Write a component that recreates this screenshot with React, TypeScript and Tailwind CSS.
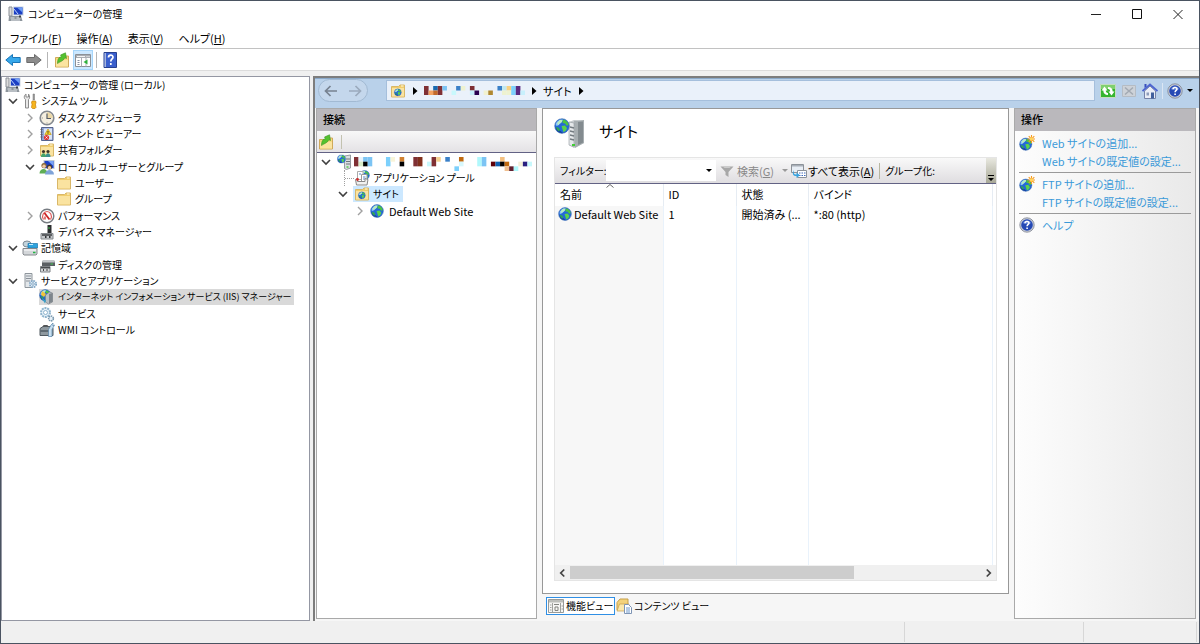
import React from 'react';

type IconProps = { className?: string };

const Svg = ({ className = 'h-4 w-4', children }: IconProps & { children: React.ReactNode }) => (
  <svg viewBox="0 0 16 16" className={`shrink-0 ${className}`} fill="none" aria-hidden="true">
    {children}
  </svg>
);

const ComputerIcon = () => (
  <Svg>
    <path d="M1 1h3v9H1z" fill="#dcdcdc" stroke="#8a8f96" />
    <path d="M5 .5h10.500v9H5z" fill="#c9d2de" />
    <path d="M6 1.500h8.500v7H6z" fill="#1b3fc4" />
    <path d="M9 1.500h5.500v5z" fill="#6f9df5" />
    <path d="M6 3l4 5" stroke="#bcd2ff" />
    <path d="M1 10h12l1.500 5H.5z" fill="#8d959c" />
    <path d="M2.500 12h4M8.500 12h4M3 14h9" stroke="#e3e6e9" />
    <path d="M11 9.500h2v2h-2z" fill="#3b4148" />
  </Svg>
);

const ToolsIcon = () => (
  <Svg>
    <path d="M3.500 6.500v8.500h3V6.500c1.500-1 1.500-3.500 0-5.500v3H4V1C1.800 2.500 1.800 5.500 3.500 6.500z" fill="#e8e8e8" stroke="#8b8b8b" />
    <path d="M11 1h1.500v6H11z" fill="#9a9a9a" stroke="#777" strokeWidth=".5" />
    <path d="M10 8h3.600l.5 2-.7 1 .6 3.500-1 1h-2.500l-1-1 .6-3.500-.6-1z" fill="#f7b51c" stroke="#c47f0c" strokeWidth=".7" />
  </Svg>
);

const ClockIcon = () => (
  <Svg>
    <circle cx="8" cy="8" r="6.800" fill="#f5efe0" stroke="#858a90" strokeWidth="1.600" />
    <path d="M8 2.200A5.800 5.800 0 0 1 13.800 8H8z" fill="#ecd9a8" />
    <path d="M8 3.500V8.500h4" stroke="#555b66" strokeWidth="1.200" />
    <path d="M8 12.500v1M2.800 8h1" stroke="#8a8a8a" />
  </Svg>
);

const EventIcon = () => (
  <Svg>
    <path d="M2.500 1.500h11.500v13H2.500z" fill="#8fa6d8" stroke="#56638c" />
    <path d="M5 2.500h8v11H5z" fill="#dbe5f6" />
    <path d="M1.500 3.500h2M1.500 6h2M1.500 8.500h2M1.500 11h2" stroke="#5d5d66" />
    <path d="M9 3l3.200 5.500H5.800z" fill="#ffd92e" stroke="#b58a00" strokeWidth=".6" />
    <path d="M9 5v1.800M9 7.300v.7" stroke="#222" strokeWidth=".9" />
    <circle cx="7.500" cy="11.500" r="2.600" fill="#dc3535" />
    <path d="M6.500 10.500l2 2M8.500 10.500l-2 2" stroke="#fff" strokeWidth=".8" />
  </Svg>
);

const Folder = () => (
  <>
    <path d="M1.500 3.500h7l1.500-1.500h4.500v12h-13z" fill="#f0cd6d" stroke="#d9b768" />
    <path d="M2 5h12v8.500H2z" fill="#fae3a0" />
    <path d="M11 3h2.500" stroke="#fff8dc" />
  </>
);

const FolderIcon = () => (
  <Svg>
    <Folder />
  </Svg>
);

const SharedIcon = () => (
  <Svg>
    <Folder />
    <circle cx="4.500" cy="9.500" r="1.600" fill="#3e3425" />
    <circle cx="9" cy="9.500" r="1.600" fill="#3e3425" />
    <path d="M2 15c0-5 5-5 5 0z" fill="#46a36a" />
    <path d="M6.500 15c0-5 5-5 5 0z" fill="#3c9090" />
  </Svg>
);

const UsersIcon = () => (
  <Svg>
    <path d="M4.500 1h11v9h-11z" fill="#bfc7d1" />
    <path d="M5.500 2h9v7h-9z" fill="#1b3fc4" />
    <path d="M9 2h5.500v5z" fill="#7ba4f6" />
    <circle cx="5" cy="6.500" r="2.600" fill="#8a6a3b" />
    <circle cx="5" cy="7.300" r="1.700" fill="#f0c8a0" />
    <circle cx="10.500" cy="8" r="2.500" fill="#4b3a28" />
    <circle cx="10.500" cy="8.800" r="1.700" fill="#f0c8a0" />
    <path d="M.5 14.500c0-6 8-6 8 0z" fill="#5fae55" />
    <path d="M6 15.500c0-6 9-6 9 0z" fill="#7fa3d8" />
  </Svg>
);

const PerformanceIcon = () => (
  <Svg>
    <circle cx="8" cy="8" r="6.800" fill="#fff" stroke="#777c82" strokeWidth="1.400" />
    <path d="M4.500 11.500C2 7.500 5 3.500 8 3.500s6 4 3.500 8" stroke="#e05a5a" strokeWidth="1.200" />
    <path d="M5.500 5l5 6.500" stroke="#c22" strokeWidth="1.800" />
    <path d="M6 8.500v3" stroke="#c22" strokeWidth="1.200" />
  </Svg>
);

const DeviceIcon = () => (
  <Svg>
    <path d="M8.500 1h4v9h-4z" fill="#2d2f31" />
    <path d="M9.500 3h1v2h-1z" fill="#3fbf4d" />
    <path d="M2 9.500h12v5.500H2z" fill="#c4c7ca" stroke="#85898d" />
    <path d="M3 10h10v2H3z" fill="#5c5f62" />
    <path d="M6 12h1.500v2H6zM10 12h1.500v2H10z" fill="#303335" />
  </Svg>
);

const StorageIcon = () => (
  <Svg>
    <ellipse cx="5" cy="4" rx="4" ry="3" fill="#c4d4dc" stroke="#7d8b95" />
    <path d="M6 3.500h9.500v4.500H6z" fill="#2ea3dd" stroke="#1b75ae" strokeWidth=".7" />
    <path d="M7 4.500h4" stroke="#c7edff" />
    <path d="M1 8.500h14v5.500l-1 1H2l-1-1z" fill="#d4d7da" stroke="#85898e" />
    <path d="M2 10h12" stroke="#fff" />
    <path d="M11 12.500h2.500" stroke="#24b546" strokeWidth="1.500" />
  </Svg>
);

const DiskIcon = () => (
  <Svg>
    <path d="M4 3h11l1 3v3H3V6z" fill="#5b5f63" />
    <path d="M4 3h11l.7 2.500H3.400z" fill="#c2c5c8" />
    <path d="M11.500 7h2.500" stroke="#47cf59" />
    <path d="M1.500 9.500H11v5.500H1.500z" fill="#d5d7d9" stroke="#7e8286" />
    <path d="M2 10h9v1.500H2z" fill="#484b4e" />
    <path d="M4 12h1v2H4zM7.500 12h1v2h-1z" fill="#444" />
  </Svg>
);

const ServerIcon = () => (
  <Svg>
    <path d="M3 .5h7v14H3z" fill="#e3e7ea" stroke="#8f969c" />
    <path d="M4 3h5M4 5.500h5M4 8h4" stroke="#8a9199" />
    <circle cx="11" cy="11" r="3.200" fill="#eaf3fa" stroke="#7fa5c4" strokeWidth="1.700" strokeDasharray="1.700 .8" />
    <circle cx="11" cy="11" r="1.300" fill="#fff" stroke="#7fa5c4" />
  </Svg>
);

const GlobeShape = () => (
  <>
    <circle cx="8" cy="8" r="7.300" fill="#2468d8" />
    <path d="M1.500 9a6.600 6.600 0 0 0 11 4.500L9 15z" fill="#163f9e" />
    <path d="M1.500 7a6.700 6.700 0 0 1 7.500-5.500L7 5 3 8z" fill="#8cc6fa" />
    <path d="M3 5l3-3.300 2.500.3-.5 2L5.500 5.500 4.500 7.500z" fill="#b9ecc0" />
    <path d="M9 1.500c3 .3 5.500 3 5.700 5.500l-2 .8-1.700-2.300-2.500-.5z" fill="#4cc540" />
    <path d="M7.500 8l3.500-.5 2 2.500-1 2.500-2.500 1.700-1-3z" fill="#5ad34b" />
    <path d="M2 9l2.500.5 1.500 2-.8 2C3.500 12.500 2.300 11 2 9z" fill="#2ea55a" />
    <circle cx="8" cy="8" r="7.300" stroke="#3f6fb0" strokeWidth=".6" />
  </>
);

const GlobeIcon = ({ className }: IconProps) => (
  <Svg className={className}>
    <GlobeShape />
  </Svg>
);

const IisIcon = () => (
  <Svg>
    <g transform="scale(.78)">
      <GlobeShape />
    </g>
    <path d="M3 2l4 3-2 3-3-2z" fill="#f2c53a" />
    <path d="M6.500 6l4-3 3 1v9l-4 2-3-2z" fill="#b9bfc4" stroke="#7c8288" strokeWidth=".7" />
    <path d="M10 5v9.500l3.500-2V4z" fill="#7e868d" />
    <path d="M2.500 9l3.500 5.500 1-3z" fill="#3aa0c8" />
  </Svg>
);

const GearsIcon = () => (
  <Svg>
    <circle cx="6.500" cy="6.500" r="4.500" fill="#e6f1f8" stroke="#8fb4cd" strokeWidth="2" strokeDasharray="2 .8" />
    <circle cx="6.500" cy="6.500" r="2" fill="#fff" stroke="#8fb4cd" />
    <circle cx="12" cy="12.500" r="2.400" fill="#e6f1f8" stroke="#7795ab" strokeWidth="1.500" strokeDasharray="1.400 .6" />
  </Svg>
);

const WmiIcon = () => (
  <Svg>
    <path d="M1 6.500l3-2h9l1 2v7H1z" fill="#8f999f" stroke="#505a61" />
    <path d="M4.500 5V3.500h4V5" stroke="#555" />
    <path d="M1.500 9h10" stroke="#48535a" strokeWidth="1.300" />
    <path d="M9.500 14.500v-7L12 3l2-2v3l1.500-1L13 7.500v7z" fill="#c8dff0" stroke="#5784a8" strokeWidth=".7" />
  </Svg>
);

const SiteFolderIcon = () => (
  <Svg>
    <Folder />
    <g transform="translate(4 5.500) scale(.48)">
      <GlobeShape />
    </g>
  </Svg>
);

const PoolIcon = () => (
  <Svg>
    <g transform="translate(5.500 0) scale(.65)">
      <GlobeShape />
    </g>
    <path d="M3.500 1.500H9v8H3.500z" fill="#fff" stroke="#aaa" />
    <path d="M7.500 4.500h5.500v8H7.500z" fill="#fff" stroke="#9a9a9a" />
    <path d="M5 4h2M9 7h2.500M9 9h2.500" stroke="#5d8ac9" />
    <path d="M1.500 9.500l2-1v3h7.500v-3l3 1-1 5.500H2.500z" fill="#f1f1f1" stroke="#888" />
    <circle cx="3.500" cy="9.500" r="1.400" fill="#cf3030" />
  </Svg>
);

const ServerGlobeIcon = ({ className }: IconProps) => (
  <svg viewBox="0 0 32 32" className={`shrink-0 ${className}`} fill="none" aria-hidden="true">
    <path d="M15 5l5-2 10 1v22l-10 5-5-3z" fill="#c5cacd" />
    <path d="M20 4l10-1v23l-9 5z" fill="#a7aeb1" />
    <path d="M24 5l5-.5v21L24 28z" fill="#838b8f" />
    <path d="M15 5l5 1v24l-5-2z" fill="#e5e8ea" stroke="#92999d" strokeWidth=".6" />
    <path d="M16 10l4 1M16 14l4 1M16 18l4 1M16 22l4 1" stroke="#737b80" strokeWidth="1.400" />
    <path d="M18 28h3" stroke="#42cc36" strokeWidth="2" />
    <g transform="translate(0 1)">
      <GlobeShape />
    </g>
  </svg>
);

// at list size the rack needs fewer, heavier strokes
const SmallServerGlobeIcon = () => (
  <Svg className="h-4 w-4">
    <path d="M7.500 2l6-1v13l-4 1.500-2-1z" fill="#d9dde0" stroke="#80878c" strokeWidth=".8" />
    <path d="M9 5h4M9 7.500h4M9 10h4" stroke="#6f767b" />
    <path d="M9.500 13h2" stroke="#42cc36" strokeWidth="1.300" />
    <g transform="translate(0 .5) scale(.56)">
      <GlobeShape />
    </g>
  </Svg>
);

const UpFolderIcon = () => (
  <Svg>
    <path d="M1.500 5.500h6L9 4h5.500v11h-13z" fill="#f8d982" stroke="#cfa95a" />
    <path d="M2 8h12v6.500H2z" fill="#fbe4a0" />
    <path d="M3.500 11.500C3.500 7 5 5 7.500 4.800L6.500 3 11.500.8 12.500 6.500 10.800 5.800C9.500 9 7 9 3.500 11.500z" fill="#54c22f" stroke="#3b9422" strokeWidth=".6" />
  </Svg>
);

const ArrowIcon = ({ back = false }: { back?: boolean }) => (
  <Svg>
    {back ? (
      <path d="M.8 8l6.700-5.500v3h7.700v5H7.500v3z" fill="#36a7ea" stroke="#1b76b8" />
    ) : (
      <path d="M15.200 8L8.500 2.500v3H.8v5h7.700v3z" fill="#8c8c8c" stroke="#6b6b6b" />
    )}
  </Svg>
);

const PaneIcon = () => (
  <Svg>
    <path d="M.5 2.500h15v12H.5z" fill="#fff" stroke="#8b9096" />
    <path d="M1 3h14v3H1z" fill="#a9adb3" />
    <path d="M2 4.500h8M11.500 4.500h1M13.500 4.500h1" stroke="#f3f3f3" />
    <path d="M6.500 6v8.500M11 6v8.500" stroke="#a9adb3" />
    <path d="M2.500 8.500h2M2.500 10.500h2M2.500 12.500h2" stroke="#8894a4" />
    <path d="M12.500 7.500v5l-4-2.500z" fill="#2eb13a" />
  </Svg>
);

const HelpBookIcon = () => (
  <Svg>
    <path d="M2 .5h12.500v15H2z" fill="#3a5fcd" stroke="#27408f" />
    <path d="M2.500 1h1.500v14H2.500z" fill="#a7b6dc" />
    <path d="M6.500 5.500c0-3 4.500-3 4.500-.3 0 1.800-2.200 1.800-2.200 4.300M8.800 11v2" stroke="#fff" strokeWidth="1.700" />
  </Svg>
);

const HelpIcon = ({ className }: IconProps) => (
  <Svg className={className}>
    <circle cx="8" cy="8" r="7.200" fill="#c9ced8" stroke="#7c828e" strokeWidth=".8" />
    <circle cx="8" cy="8" r="5.800" fill="#2549b4" />
    <path d="M3.500 6a5 5 0 0 1 9 0c-2 1.500-7 1.500-9 0z" fill="#5577d2" />
    <path d="M6 6.300c0-2.500 4-2.400 4-.2C10 7.500 8.100 7.500 8.100 9.300M8.100 10.500V12" stroke="#fff" strokeWidth="1.600" />
  </Svg>
);

const AddSiteIcon = () => (
  <Svg>
    <g transform="translate(0 2.500) scale(.84)">
      <GlobeShape />
    </g>
    <path d="M12.500 0v8M8.500 4h8M9.700 1.200l5.600 5.600M15.300 1.200L9.700 6.800" stroke="#f79b22" strokeWidth="1.100" />
    <circle cx="12.500" cy="4" r="1.700" fill="#ffd45e" />
  </Svg>
);

const RefreshIcon = () => (
  <Svg>
    <path d="M.5 1.500h15v13H.5z" fill="#35b52f" stroke="#c3dcbf" />
    <path d="M1 2h14v4H1z" fill="#7fd06f" />
    <path d="M1.500 7.500L4.500 3.500l3 4H5.800c0 1.500.7 2.200 2.200 2.500v2c-3-.2-4.700-1.500-4.700-4.500z" fill="#fff" />
    <path d="M14.500 8.500l-3 4-3-4h1.700C10.200 7 9.500 6.300 8 6V4c3 .2 4.700 1.500 4.700 4.500z" fill="#fff" />
  </Svg>
);

const StopIcon = () => (
  <Svg>
    <path d="M1.500 2.500h13v11h-13z" fill="#cdd2d8" stroke="#b5bcc4" />
    <path d="M4 4.500l8 7M12 4.500l-8 7" stroke="#a2a9b2" strokeWidth="1.500" />
  </Svg>
);

const HomeIcon = () => (
  <Svg>
    <path d="M2.500 8v7.500h11V8L8 3z" fill="#e9edf6" stroke="#7583a8" />
    <path d="M.5 8L8 1.500 15.500 8" stroke="#4e65d0" strokeWidth="1.800" />
    <path d="M2.500 5V1h2v2.500" fill="#384fbc" />
    <path d="M9 9.500h3v6H9z" fill="#41609c" />
    <path d="M4.500 9.500h2.500v3H4.500z" fill="#8d9cba" />
  </Svg>
);

const FilterIcon = () => (
  <Svg>
    <path d="M1.500 3.500h13L9.500 9v5l-3-2V9z" fill="#a7a7a7" />
    <path d="M3 3h10l-2.500 2h-5z" fill="#cbcbcb" />
  </Svg>
);

const ShowAllIcon = () => (
  <Svg>
    <path d="M.5 1.500h12v8H.5z" fill="#e8eef5" stroke="#8c9299" />
    <path d="M1 2h11v1.500H1z" fill="#a8afb7" />
    <path d="M6.500 7.500h9v7h-9z" fill="#fff" stroke="#8c9299" />
    <path d="M8 10h1.500M10.500 10H12M13 10h1.500M8 12.500h1.500M10.500 12.500H12M13 12.500h1.500" stroke="#3c68bb" />
    <path d="M2.500 7c0 4 1 4.500 3 4.500V9.500L9 12.200 5.500 15v-2C2 13 1 11 2.500 7z" fill="#39a3df" />
  </Svg>
);

const FeatureViewIcon = () => (
  <Svg>
    <path d="M.5 1.500h15v13H.5z" fill="#f6f6f4" stroke="#999b98" />
    <path d="M1 2h14v2.500H1z" fill="#bcbeba" />
    <path d="M4.500 5v9M12.500 5v9M2 7h1.500M2 9.500h1.500M2 12h1.500M13.500 8H15M13.500 11H15" stroke="#a0a29e" />
    <path d="M6 6.500h5M7 9h3v3.500H7z" stroke="#82847f" />
  </Svg>
);

const ContentViewIcon = () => (
  <Svg>
    <path d="M1 4.500l3-3.500h8v11H1z" fill="#f3d27b" stroke="#c69f4a" />
    <path d="M1 13l2.500-7H13l-2 7z" fill="#fbe8ad" stroke="#c69f4a" strokeWidth=".7" />
    <path d="M8.500 6.500h4l3 3v6h-7z" fill="#fff" stroke="#7e95b5" />
    <path d="M10 10h4M10 12h4M10 14h4" stroke="#6d98cc" />
  </Svg>
);

const Chevron = ({ open }: { open: boolean }) => (
  <Svg>
    {open ? (
      <path d="M4 6l4 4 4-4" stroke="#404040" strokeWidth="1.600" />
    ) : (
      <path d="M6 4l4 4-4 4" stroke="#a0a0a0" strokeWidth="1.400" />
    )}
  </Svg>
);

const Triangle = () => (
  <svg viewBox="0 0 18 8" className="h-2 w-[18px] shrink-0" aria-hidden="true">
    <path d="M7 0l4.500 4L7 8z" fill="#000" />
  </svg>
);

type Cell = [number, number, string, number?];

// [column, row, color, rows spanned]
const pathCells: Cell[] = [
  [0, 0, '#7f3034', 2], [1, 1, '#f4a260'], [2, 0, '#1a6ab0'], [2, 1, '#c46a2a'], [3, 0, '#7f3034', 2],
  [4, 0, '#7cc4f4'], [6, 1, '#c8f8fc'], [7, 0, '#3a80c8'], [8, 0, '#eef2d0'], [10, 0, '#7f3034'],
  [10, 1, '#c8f0fc'], [11, 1, '#2a0050'], [13, 1, '#f2f2d0'], [14, 1, '#b08830'], [16, 0, '#3a80c8'],
  [17, 0, '#c0e8f0'], [17, 1, '#eef2d0'], [18, 0, '#f8d080'], [18, 1, '#eef2d0'], [19, 0, '#7cd0fc', 2],
  [20, 0, '#5a2a80', 2], [21, 1, '#c8f0fc'],
];

const serverCells: Cell[] = [
  [0, 0, '#7f3034', 2], [1, 0, '#e8f4fc'], [1, 1, '#d8ecc8'], [2, 0, '#7cc4f4'], [2, 1, '#000000'],
  [3, 0, '#7cc4f4', 2], [7, 0, '#7cd0fc', 2], [8, 0, '#f8f4d8'], [10, 0, '#d08030'], [10, 1, '#000000'],
  [13, 0, '#7f3034', 2], [14, 0, '#80301c', 2], [16, 1, '#c8f8fc'], [17, 0, '#7f3034', 2], [18, 0, '#f4d090'],
  [20, 0, '#3a80c8'], [22, 2, '#7cd0fc'], [23, 0, '#c06a10'], [23, 1, '#d8f8fc'], [27, 0, '#b0f8fc', 2],
  [28, 0, '#7cc4f4', 2], [30, 1, '#600008'], [31, 1, '#1060b0'], [32, 0, '#f4c080'], [32, 1, '#000000'],
  [33, 1, '#c06a10'], [33, 2, '#f0c090'], [34, 2, '#602030'], [35, 2, '#b0f8fc'], [36, 1, '#f4f0d8'],
  [37, 1, '#2a2080'], [38, 1, '#c8f8fc'],
];

const Mosaic = ({ cells, cols, rows, className }: { cells: Cell[]; cols: number; rows: number; className: string }) => (
  <svg viewBox={`0 0 ${cols} ${rows}`} preserveAspectRatio="none" className={`shrink-0 ${className}`} aria-hidden="true">
    {cells.map(([x, y, fill, span = 1]) => (
      <rect key={`${x}-${y}`} x={x} y={y} width="1" height={span} fill={fill} />
    ))}
  </svg>
);

const indents = ['', 'pl-0', 'pl-[17px]', 'pl-[34px]'];

const treeItems = [
  { label: 'コンピューターの管理 (ローカル)', depth: 0, icon: ComputerIcon },
  { label: 'システム ツール', depth: 1, icon: ToolsIcon, open: true },
  { label: 'タスク スケジューラ', depth: 2, icon: ClockIcon, open: false },
  { label: 'イベント ビューアー', depth: 2, icon: EventIcon, open: false },
  { label: '共有フォルダー', depth: 2, icon: SharedIcon, open: false },
  { label: 'ローカル ユーザーとグループ', depth: 2, icon: UsersIcon, open: true },
  { label: 'ユーザー', depth: 3, icon: FolderIcon },
  { label: 'グループ', depth: 3, icon: FolderIcon },
  { label: 'パフォーマンス', depth: 2, icon: PerformanceIcon, open: false },
  { label: 'デバイス マネージャー', depth: 2, icon: DeviceIcon },
  { label: '記憶域', depth: 1, icon: StorageIcon, open: true },
  { label: 'ディスクの管理', depth: 2, icon: DiskIcon },
  { label: 'サービスとアプリケーション', depth: 1, icon: ServerIcon, open: true },
  { label: 'インターネット インフォメーション サービス (IIS) マネージャー', depth: 2, icon: IisIcon, selected: true },
  { label: 'サービス', depth: 2, icon: GearsIcon },
  { label: 'WMI コントロール', depth: 2, icon: WmiIcon },
];

const menus = [
  { label: 'ファイル', hotkey: 'F' },
  { label: '操作', hotkey: 'A' },
  { label: '表示', hotkey: 'V' },
  { label: 'ヘルプ', hotkey: 'H' },
];

const TitleBar = () => (
  <header className="flex h-7 items-center justify-between pb-0.5 pl-[7px]">
    <div className="flex items-center gap-1">
      <ComputerIcon />
      <h1 className="text-[10px]">コンピューターの管理</h1>
    </div>
    <div className="flex gap-[25px] pr-[13px]">
      <button aria-label="最小化">
        <Svg>
          <path d="M3 8.500h10" stroke="#222" />
        </Svg>
      </button>
      <button aria-label="最大化">
        <Svg>
          <path d="M3.500 3.500h9v9h-9z" stroke="#111" />
        </Svg>
      </button>
      <button aria-label="閉じる">
        <Svg>
          <path d="M3.500 4l9 9M12.500 4l-9 9" stroke="#222" />
        </Svg>
      </button>
    </div>
  </header>
);

const MenuBar = () => (
  <nav className="flex h-5 items-center gap-[15px] border-b border-[#c2c2c2] pb-0.5 pl-[9px]">
    {menus.map(({ label, hotkey }) => (
      <button key={hotkey}>
        {label}(<u className="underline-offset-1">{hotkey}</u>)
      </button>
    ))}
  </nav>
);

const Toolbar = () => (
  <div className="flex h-[22px] items-center border-b border-[#dcdcdc] pl-1">
    <button aria-label="戻る"><ArrowIcon back /></button>
    <button aria-label="進む" className="ml-[5px]"><ArrowIcon /></button>
    <span className="mx-[5px] h-4 w-px bg-[#b5b5b5]" />
    <button aria-label="1 つ上のレベルへ" className="ml-px"><UpFolderIcon /></button>
    <button aria-label="ツリーの表示" className="ml-[3px] flex h-5 w-5 items-center justify-center bg-[#cce8ff] outline outline-1 -outline-offset-1 outline-[#a5d5fa]">
      <PaneIcon />
    </button>
    <span className="mx-[3px] h-4 w-px bg-[#b5b5b5]" />
    <button aria-label="ヘルプ" className="ml-0.5"><HelpBookIcon /></button>
  </div>
);

const ConsoleTree = () => (
  <aside className="w-[309px] shrink-0 border border-[#9497a3] bg-white pl-[3px]">
    <ul className="grid h-[261px] auto-rows-fr text-[10px]">
      {treeItems.map(({ label, depth, icon: Icon, open, selected }) => (
        <li key={label} className={`flex items-center ${indents[depth]}`}>
          {depth > 0 && (
            <span className="flex w-[17px] shrink-0">{open !== undefined && <Chevron open={open} />}</span>
          )}
          <span className={`flex h-4 items-center gap-[3px] pr-[3px] ${selected ? 'bg-[#d9d9d9] text-[9px]' : ''}`}>
            <Icon />
            <span className="whitespace-nowrap">{label}</span>
          </span>
        </li>
      ))}
    </ul>
  </aside>
);

const AddressBar = () => (
  <div className="flex h-[30px] shrink-0 items-center border-t border-[#8ba9c9] bg-[#b9d1ea] pr-1.5 pb-1.5 pl-[3px]">
    <div className="flex h-[23px] w-[50px] items-center justify-between rounded-full border border-[#a2bad3] bg-[#c4d7ec] px-1 text-[#778290]">
      <button aria-label="前に戻る">
        <Svg><path d="M14 8H3M7.500 3L2.500 8l5 5" stroke="currentColor" strokeWidth="1.700" /></Svg>
      </button>
      <button aria-label="次に進む" className="text-[#9baabd]">
        <Svg><path d="M2 8h11M8.500 3l5 5-5 5" stroke="currentColor" strokeWidth="1.700" /></Svg>
      </button>
    </div>
    <nav className="ml-[18px] flex h-[21px] flex-1 items-center border border-[#a5bfdc] bg-[#eaf1fa] pl-[3px]">
      <SiteFolderIcon />
      <Triangle />
      <Mosaic cells={pathCells} cols={22} rows={2} className="h-[9px] w-[101px]" />
      <Triangle />
      <button>サイト</button>
      <Triangle />
    </nav>
    <div className="flex items-center gap-1 pl-[5px]">
      <button aria-label="更新"><RefreshIcon /></button>
      <button aria-label="中止" className="ml-px"><StopIcon /></button>
      <button aria-label="ホーム" className="ml-px"><HomeIcon /></button>
      <button aria-label="ヘルプ" className="flex items-center gap-1 border-l border-[#dbe6f3] pl-1">
        <HelpIcon />
        <svg viewBox="0 0 6 3" className="h-[3px] w-1.5"><path d="M0 0h6L3 3z" fill="#000" /></svg>
      </button>
    </div>
  </div>
);

const PaneHeader = ({ children }: { children: React.ReactNode }) => (
  <h2 className="flex h-[22px] items-center bg-[#bab8bc] pb-0.5 pl-1.5 font-medium">{children}</h2>
);

const Connections = () => (
  <section className="flex w-[221px] shrink-0 flex-col border border-[#a9a9a9] bg-white">
    <PaneHeader>接続</PaneHeader>
    <div className="flex h-[22px] shrink-0 items-center border-b border-[#626284] bg-gradient-to-b from-[#f8f8f8] to-[#e4e2e5] pl-px">
      <button aria-label="接続の作成"><UpFolderIcon /></button>
      <span className="ml-[7px] h-3.5 w-px bg-[#c3c2b0]" />
    </div>
    <ul>
      <li className="flex h-[17px] items-center pl-px">
        <Chevron open />
        <span className="ml-[3px] flex"><SmallServerGlobeIcon /></span>
        <Mosaic cells={serverCells} cols={39} rows={3} className="mt-1 ml-px h-3.5 w-[178px]" />
      </li>
      <li className="flex h-4 items-center pl-[27px]">
        <span className="h-4 w-2.5 shrink-0 border-l border-dotted border-[#a0a0a0] pt-2">
          <span className="block border-t border-dotted border-[#a0a0a0]" />
        </span>
        <PoolIcon />
        <span className="ml-[3px] text-[10px]">アプリケーション プール</span>
      </li>
      <li className="flex h-4 items-center pl-[18px]">
        <Chevron open />
        <span className="ml-0.5 flex h-4 items-center gap-[3px] bg-[#cce8ff] pr-1 pl-px text-[10px]">
          <SiteFolderIcon />
          サイト
        </span>
      </li>
      <li className="flex h-[17px] items-center pl-[35px]">
        <Chevron open={false} />
        <GlobeIcon className="ml-0.5 h-3.5 w-3.5" />
        <span className="ml-[5px]">Default Web Site</span>
      </li>
    </ul>
  </section>
);

const SiteTable = () => (
  <table className="h-full w-full table-fixed border-collapse text-left whitespace-nowrap">
    <colgroup>
      <col className="w-[108px]" />
      <col className="w-[73px]" />
      <col className="w-[72px]" />
      <col />
      <col className="w-1" />
    </colgroup>
    <thead>
      <tr className="h-[22px] [&>th]:border-r [&>th]:border-[#e6ecf3] [&>th]:pb-0.5 [&>th]:pl-[5px] [&>th]:font-normal">
        <th className="relative">
          名前
          <svg viewBox="0 0 8 4" className="absolute top-0 left-[51px] h-1 w-2" fill="none">
            <path d="M.5 3.500L4 .5l3.500 3" stroke="#666" />
          </svg>
        </th>
        <th>ID</th>
        <th>状態</th>
        <th>バインド</th>
        <td />
      </tr>
    </thead>
    <tbody className="[&_td]:border-r [&_td]:border-[#e9f2fb] [&_td:first-child]:bg-[#f7f7f7] [&_td:last-child]:border-0">
      <tr className="h-[18px] [&>td]:pb-0.5 [&>td]:pl-[5px]">
        <td>
          <span className="-ml-0.5 flex items-center gap-0.5">
            <GlobeIcon className="h-3.5 w-3.5" />
            Default Web Site
          </span>
        </td>
        <td>1</td>
        <td className="truncate">開始済み (...</td>
        <td>*:80 (http)</td>
        <td />
      </tr>
      <tr>
        <td /><td /><td /><td /><td />
      </tr>
    </tbody>
  </table>
);

const SitesView = () => (
  <main className="flex flex-1 flex-col border border-[#989898] bg-white px-[11px] pb-3">
    <div className="flex h-12 shrink-0 items-center gap-[13px]">
      <ServerGlobeIcon className="h-8 w-8" />
      <h2 className="pb-1 text-[15px]">サイト</h2>
    </div>
    <div className="flex flex-1 flex-col border border-[#e5e5e5]">
      <div className="flex h-[26px] shrink-0 items-center border-b border-[#626284] bg-gradient-to-b from-[#f9f9f9] to-[#dfdde0] pl-[5px]">
        <label htmlFor="filter" className="w-[46px] text-[10px] whitespace-nowrap">フィルター:</label>
        <div className="relative h-[21px] w-[110px]">
          <select id="filter" className="h-full w-full appearance-none bg-white" />
          <svg viewBox="0 0 6 3" className="pointer-events-none absolute top-[9px] right-1 h-[3px] w-1.5">
            <path d="M0 0h6L3 3z" fill="#000" />
          </svg>
        </div>
        <button disabled className="ml-[3px] flex items-center gap-0.5 text-[#888]">
          <FilterIcon />
          <span>検索(<u className="underline-offset-1">G</u>)</span>
          <svg viewBox="0 0 6 3" className="ml-1.5 h-[3px] w-1.5"><path d="M0 0h6L3 3z" fill="#999" /></svg>
        </button>
        <button className="ml-[3px] flex items-center gap-px whitespace-nowrap">
          <ShowAllIcon />
          <span>すべて表示(<u className="underline-offset-1">A</u>)</span>
        </button>
        <span className="mx-[5px] h-4 w-px bg-[#b7b6a0]" />
        <span className="flex-1 text-[10px] whitespace-nowrap">グループ化:</span>
        <button aria-label="ツール バー オプション" className="flex h-full w-2.5 items-end justify-center bg-gradient-to-b from-[#e8e8e0] to-[#a8a897] pb-0.5">
          <svg viewBox="0 0 6 6" className="h-1.5 w-1.5"><path d="M0 0h6v1H0zM0 3h6L3 6z" fill="#000" /></svg>
        </button>
      </div>
      <div className="flex-1">
        <SiteTable />
      </div>
      <div className="flex h-[15px] shrink-0 items-center bg-[#f0f0f0]">
        <button aria-label="左へスクロール">
          <Svg className="h-3.5 w-[15px]"><path d="M10 4L6 8l4 4" stroke="#444" strokeWidth="2" /></Svg>
        </button>
        <div className="h-[13px] flex-1">
          <div className="h-full w-[69%] bg-[#cdcdcd]" />
        </div>
        <button aria-label="右へスクロール">
          <Svg className="h-3.5 w-[15px]"><path d="M6 4l4 4-4 4" stroke="#444" strokeWidth="2" /></Svg>
        </button>
      </div>
    </div>
  </main>
);

const ViewTabs = () => (
  <div className="flex h-[25px] items-center pb-0.5 pl-1 text-[10px]">
    <button className="flex h-[18px] w-[69px] items-center gap-0.5 border border-[#2f8fe5] bg-white pl-px whitespace-nowrap">
      <FeatureViewIcon />
      機能ビュー
    </button>
    <button className="ml-px flex h-[18px] items-center gap-0.5 whitespace-nowrap">
      <ContentViewIcon />
      コンテンツ ビュー
    </button>
  </div>
);

const actionGroups = [
  { icon: AddSiteIcon, links: ['Web サイトの追加...', 'Web サイトの既定値の設定...'] },
  { icon: AddSiteIcon, links: ['FTP サイトの追加...', 'FTP サイトの既定値の設定...'] },
  { icon: HelpIcon, links: ['ヘルプ'] },
];

const Actions = () => (
  <section className="w-[182px] shrink-0 border border-[#a9a9a9] bg-gradient-to-r from-[#fdfdfd] to-[#e9e9e9]">
    <PaneHeader>操作</PaneHeader>
    <div className="px-1 pt-px">
      {actionGroups.map(({ icon: Icon, links }) => (
        <div key={links[0]} className="flex items-start gap-[7px] border-b border-[#9a9a9a] pt-0.5 pb-0.5 last:border-0">
          <span className="pt-px"><Icon /></span>
          <div className="flex flex-col text-[#3b9ad9]">
            {links.map((link) => (
              <a key={link} href="#" className="leading-[18px] whitespace-nowrap">{link}</a>
            ))}
          </div>
        </div>
      ))}
    </div>
  </section>
);

const StatusBar = () => (
  <footer className="flex h-[22px] items-stretch bg-[#f0f0f0] pt-px pr-0.5 pb-px">
    <div className="flex-1 border-r border-[#d7d7d7]" />
    <div className="w-[179px] border-r border-[#d7d7d7]" />
    <div className="w-[113px] border-r border-[#d7d7d7]" />
  </footer>
);

export default function App() {
  return (
    <div className="flex min-h-screen flex-col border border-[#4a5361] bg-white font-['Noto_Sans_CJK_JP',sans-serif] text-[11px] leading-4 text-black [font-feature-settings:'palt']">
      <TitleBar />
      <MenuBar />
      <Toolbar />
      <div className="flex flex-1 bg-[#f0f0f0] pt-[5px]">
        <ConsoleTree />
        <div className="ml-[3px] flex flex-1 flex-col border-t-2 border-l-2 border-[#7d7d7d] bg-[#f6f6f6]">
          <AddressBar />
          <div className="flex flex-1 pr-[3px] pb-0.5 pl-px">
            <Connections />
            <div className="mx-[5px] flex flex-1 flex-col">
              <SitesView />
              <ViewTabs />
            </div>
            <Actions />
          </div>
        </div>
      </div>
      <StatusBar />
    </div>
  );
}
